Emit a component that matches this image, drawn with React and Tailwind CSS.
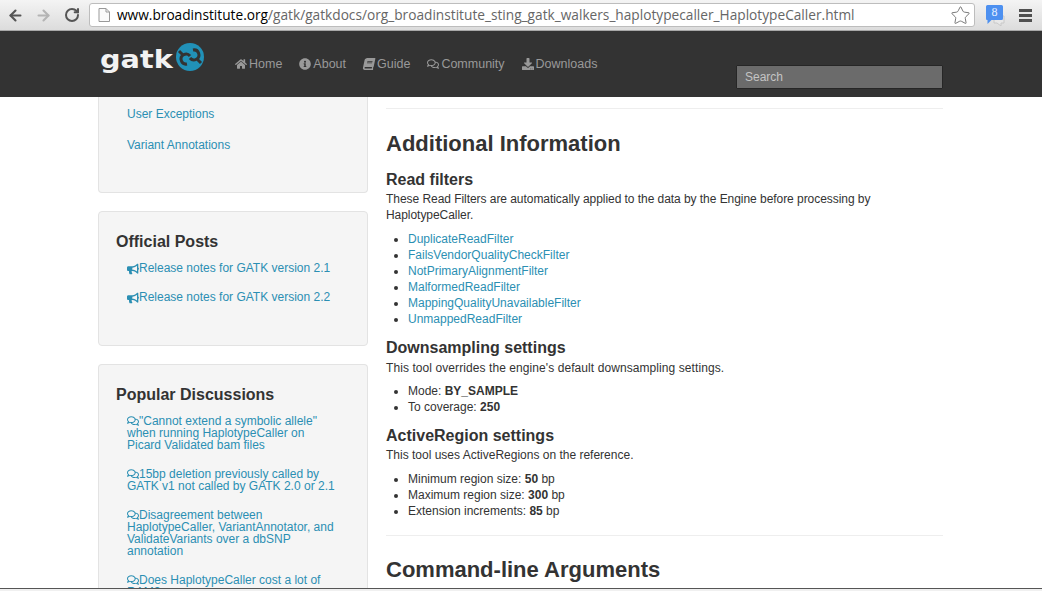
import { ArrowLeft, ArrowRight, RotateCw, Star } from "lucide-react";
import { FaHome, FaInfoCircle, FaBook, FaRegComments, FaDownload, FaBullhorn } from "react-icons/fa";

const navItems = [
    { label: "Home", icon: FaHome, iconClass: "" },
    { label: "About", icon: FaInfoCircle, iconClass: "" },
    { label: "Guide", icon: FaBook, iconClass: "-skew-x-12" },
    { label: "Community", icon: FaRegComments, iconClass: "" },
    { label: "Downloads", icon: FaDownload, iconClass: "" },
];

const filters = [
    "DuplicateReadFilter",
    "FailsVendorQualityCheckFilter",
    "NotPrimaryAlignmentFilter",
    "MalformedReadFilter",
    "MappingQualityUnavailableFilter",
    "UnmappedReadFilter",
];

const discussions = [
    ["\"Cannot extend a symbolic allele\"", "when running HaplotypeCaller on", "Picard Validated bam files"],
    ["15bp deletion previously called by", "GATK v1 not called by GATK 2.0 or 2.1"],
    ["Disagreement between", "HaplotypeCaller, VariantAnnotator, and", "ValidateVariants over a dbSNP", "annotation"],
    ["Does HaplotypeCaller cost a lot of", "RAM?"],
];

const Toolbar = () => (
    <div className="h-[31px] shrink-0 flex items-center bg-gradient-to-b from-[#f4f4f4] to-[#dcdcdc] border-b border-[#a8a8a8]">
        <ArrowLeft size={17} strokeWidth={3} className="ml-[7px] text-[#555555]" />
        <ArrowRight size={17} strokeWidth={3} className="ml-[11px] text-[#b4b4b4]" />
        <RotateCw size={16} strokeWidth={3} className="ml-[12px] text-[#555555]" />
        <div className="ml-[9px] w-[886px] h-[24px] flex items-center bg-white border border-[#bdbdbd] rounded-[3px] text-[13.700px] font-['Open_Sans',sans-serif]">
            <svg width="12" height="14" viewBox="0 0 12 14" className="ml-[8px] mr-[7px]">
                <path d="M1 .5h7l3.5 3.5v9.500h-10.500z M8 .5v3.500h3.500" fill="#fafafa" stroke="#999999" />
            </svg>
            <span className="text-black">www.broadinstitute.org</span>
            <span className="text-[#666666]">/gatk/gatkdocs/org_broadinstitute_sting_gatk_walkers_haplotypecaller_HaplotypeCaller.html</span>
            <Star size={21} strokeWidth={1} className="ml-auto mr-[3px] text-[#666666]" />
        </div>
        <svg width="21" height="22" viewBox="0 0 21 22" className="ml-[9px]">
            <path d="M10 12h10v7h-3v3l-4-3h-3z" fill="#e8e8e8" stroke="#c8c8c8" />
            <path d="M2 2.500q0-1.500 1.500-1.500h14q1.500 0 1.500 1.500v12q0 1.500-1.500 1.500h-10l-4 4v-4h-.5q-1 0-1-1.500z" fill="#4d90f0" />
            <text x="10.500" y="12" fontSize="12" fill="#e8f0ff" textAnchor="middle" fontFamily="'Liberation Serif', serif">8</text>
        </svg>
        <div className="ml-[14px] w-[13px] flex flex-col gap-[2px]">
            <div className="h-[3px] bg-[#505050]" />
            <div className="h-[3px] bg-[#505050]" />
            <div className="h-[3px] bg-[#505050]" />
        </div>
    </div>
);

const Logo = () => (
    <div className="w-[105px] flex items-start">
        <div className="w-[76px] mt-[3px]">
            <span className="block origin-left scale-x-[1.15] text-[25px] leading-[28px] font-bold text-[#f2f2f2] font-['DejaVu_Sans',sans-serif]">gatk</span>
        </div>
        <svg width="28" height="28" viewBox="0 0 28 28">
            <circle cx="14" cy="14" r="14" fill="#2191b8" />
            <path d="M3 8l4 4M11 21a5 5 0 1 1 3-8" fill="none" stroke="#333333" strokeWidth="3" />
            <path d="M25 20l-4-4M17 7a5 5 0 1 1-3 8" fill="none" stroke="#333333" strokeWidth="3" />
        </svg>
    </div>
);

const Navbar = () => (
    <div className="h-[66px] shrink-0 bg-[#333333] flex">
        <div className="ml-[100px] w-[843px] flex">
            <div className="mt-[12px]">
                <Logo />
            </div>
            <nav className="ml-[30px] mt-[25px] h-[16px] flex gap-[17px] text-[12.500px] leading-[16px] text-[#999999]">
                {navItems.map((item) => (
                    <a key={item.label} className="flex items-center gap-[2px]">
                        <item.icon size={12} className={item.iconClass} />
                        {item.label}
                    </a>
                ))}
            </nav>
            <div className="ml-auto mt-[34px] w-[207px] h-[24px] bg-[#6b6b6b] border border-[#262626] rounded-[1px] flex items-center px-[8px] pb-[1px] text-[12px] text-[#c4c4c4]">
                Search
            </div>
        </div>
    </div>
);

const Panel = ({ className, children }) => (
    <div className={`shrink-0 bg-[#f5f5f5] border border-[#e3e3e3] rounded-[4px] ${className}`}>{children}</div>
);

const Sidebar = () => (
    <aside className="w-[270px] shrink-0 flex flex-col gap-[18px] text-[12px] leading-[13px] text-[#2b8fb3]">
        <Panel className="h-[96px] border-t-0 rounded-t-none pl-[28px] pt-[11px]">
            <a className="block">User Exceptions</a>
            <a className="block mt-[18px]">Variant Annotations</a>
        </Panel>
        <Panel className="h-[135px] pl-[17px] pt-[21px]">
            <h4 className="text-[16px] leading-[18px] font-bold text-[#333333]">Official Posts</h4>
            <a className="mt-[11px] ml-[11px] flex items-center">
                <FaBullhorn size={12} />
                Release notes for GATK version 2.1
            </a>
            <a className="mt-[16px] ml-[11px] flex items-center">
                <FaBullhorn size={12} />
                Release notes for GATK version 2.2
            </a>
        </Panel>
        <Panel className="h-[300px] border-b-0 pl-[17px] pt-[21px]">
            <h4 className="text-[16px] leading-[18px] font-bold text-[#333333]">Popular Discussions</h4>
            <div className="mt-[11px] ml-[11px] flex flex-col gap-[17px] leading-[12px]">
                {discussions.map((lines) => (
                    <a key={lines[0]} className="block">
                        {lines.map((line, i) => (
                            <div key={line} className="flex items-center h-[12px] whitespace-nowrap">
                                {i === 0 && <FaRegComments size={12} />}
                                {line}
                            </div>
                        ))}
                    </a>
                ))}
            </div>
        </Panel>
    </aside>
);

const Content = () => (
    <main className="w-[557px] text-[12px] leading-[16px] text-[#333333]">
        <hr className="mt-[11px] border-[#eeeeee]" />
        <h2 className="mt-[20px] text-[22px] leading-[29px] font-bold">Additional Information</h2>
        <h4 className="mt-[12px] text-[16px] leading-[20px] font-bold">Read filters</h4>
        <p className="mt-[1px] tracking-[-0.05px]">These Read Filters are automatically applied to the data by the Engine before processing by<br />HaplotypeCaller.</p>
        <ul className="mt-[8px] ml-[22px] list-disc text-[#2b8fb3] marker:text-[#333333]">
            {filters.map((f) => <li key={f}>{f}</li>)}
        </ul>
        <h4 className="mt-[11px] text-[16px] leading-[20px] font-bold">Downsampling settings</h4>
        <p className="mt-[2px] tracking-[0.08px]">This tool overrides the engine's default downsampling settings.</p>
        <ul className="mt-[7px] ml-[22px] list-disc">
            <li>Mode: <b>BY_SAMPLE</b></li>
            <li>To coverage: <b>250</b></li>
        </ul>
        <h4 className="mt-[11px] text-[16px] leading-[20px] font-bold">ActiveRegion settings</h4>
        <p className="mt-[1px]">This tool uses ActiveRegions on the reference.</p>
        <ul className="mt-[8px] ml-[22px] list-disc">
            <li>Minimum region size: <b>50</b> bp</li>
            <li>Maximum region size: <b>300</b> bp</li>
            <li>Extension increments: <b>85</b> bp</li>
        </ul>
        <hr className="mt-[16px] border-[#eeeeee]" />
        <h2 className="mt-[19px] text-[22px] leading-[29px] font-bold">Command-line Arguments</h2>
    </main>
);

const App = () => {
    return (
        <div className="w-[1042px] h-[591px] overflow-hidden flex flex-col bg-white font-['Liberation_Sans',sans-serif]">
            <Toolbar />
            <Navbar />
            <div className="flex-1 min-h-0 overflow-hidden flex pl-[98px] gap-[18px]">
                <Sidebar />
                <Content />
            </div>
            <div className="h-[3px] shrink-0 bg-[#f0f0f0] border-t border-[#555555]" />
        </div>
    );
};

export default App;
